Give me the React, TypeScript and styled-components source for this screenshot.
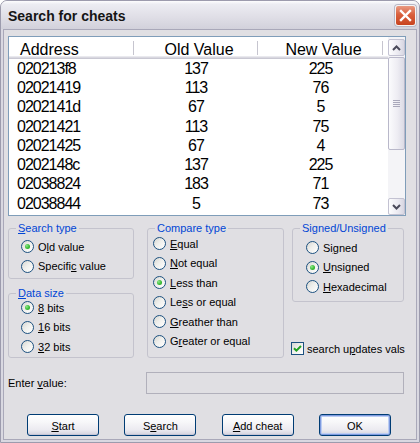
import React from 'react';
import styled, { createGlobalStyle } from 'styled-components';

const colors = {
  face: '#E0DFE3',
  frame: '#D9D8E1',
  legend: '#0046D5',
  groupLine: '#C4C3CD',
  navy: '#1C5180',
  listBorder: '#7F9DB9',
};

const listFont = '"Liberation Sans", Arial, sans-serif';

const GlobalStyle = createGlobalStyle`
  html, body {
    margin: 0;
    padding: 0;
    background: #ffffff;
  }
  body {
    font-family: "Liberation Sans", Arial, sans-serif;
    font-size: 11px;
    color: #000;
  }
  * {
    box-sizing: border-box;
  }
`;

const Window = styled.div`
  width: 420px;
  height: 443px;
  display: flex;
  flex-direction: column;
  border: 1px solid #9C9BAD;
  border-radius: 7px 7px 0 0;
  background: ${colors.frame};
  overflow: hidden;
`;

const TitleBar = styled.div`
  height: 28px;
  flex: none;
  display: flex;
  align-items: center;
  justify-content: space-between;
  padding: 0 3px 0 7px;
  background: linear-gradient(180deg, #fdfdfe 0%, #ececf2 12%, #e0dfe7 55%, #d2d1db 100%);
`;

const Title = styled.span`
  font-size: 14px;
  font-weight: bold;
  color: #151515;
  padding-top: 1px;
`;

const CloseButton = styled.div`
  width: 21px;
  height: 21px;
  border: 1px solid #f4f4f4;
  border-radius: 3px;
  background: linear-gradient(180deg, #e99a82 0%, #d9603e 45%, #c8431f 100%);
  box-shadow: 0 0 0 1px #b9b8c6;
  display: flex;
  align-items: center;
  justify-content: center;
`;

const Client = styled.div`
  flex: 1;
  margin: 0 2px 2px 2px;
  border: 1px solid #A9A8B9;
  background: ${colors.face};
  padding: 6px 12px 0 4px;
  display: flex;
  flex-direction: column;
`;

/* list view */

const ListView = styled.div`
  height: 180px;
  margin-right: -2px;
  border: 1px solid ${colors.listBorder};
  background: #fff;
  display: flex;
`;

const ListBody = styled.div`
  flex: 1;
  display: flex;
  flex-direction: column;
`;

const columns = '125px 124px 125px 1fr';

const HeaderRow = styled.div`
  height: 22px;
  display: grid;
  grid-template-columns: ${columns};
  padding-top: 3px;
  background: #fff;
  box-shadow: inset 0 -1px 0 #c9c8d3, inset 0 -2px 0 #d9d8e0, inset 0 -3px 0 #e9e9ee;
`;

const HeaderCell = styled.div<{ $align: 'left' | 'center'; $pad: number }>`
  display: flex;
  align-items: center;
  justify-content: ${p => (p.$align === 'left' ? 'flex-start' : 'center')};
  padding-left: ${p => p.$pad}px;
  font-family: ${listFont};
  font-size: 16px;
  color: #000;
  background: linear-gradient(#c6c5cf, #c6c5cf) right 1px / 1px 14px no-repeat;
`;

const Row = styled.div`
  height: 19.3px;
  display: grid;
  grid-template-columns: ${columns};
  align-items: center;
  font-family: ${listFont};
  font-size: 16px;
  letter-spacing: -1px;
  color: #000;
`;

const Cell = styled.div<{ $align: 'left' | 'center' }>`
  text-align: ${p => p.$align};
  padding-left: ${p => (p.$align === 'left' ? 8 : 0)}px;
`;

const ScrollBar = styled.div`
  width: 17px;
  flex: none;
  display: flex;
  flex-direction: column;
  background: #f4f4f7;
  padding-top: 2px;
`;

const ScrollButton = styled.div`
  height: 17px;
  flex: none;
  border: 1px solid #c3c2d2;
  border-radius: 2px;
  background: linear-gradient(90deg, #fdfdfe 0%, #ebeaf1 60%, #d8d7e2 100%);
  display: flex;
  align-items: center;
  justify-content: center;
`;

const Thumb = styled.div`
  height: 93px;
  margin-top: 1px;
  border: 1px solid #b9b8ca;
  border-radius: 2px;
  background: linear-gradient(90deg, #fbfbfd 0%, #eeedf3 55%, #dcdbe5 100%);
  display: flex;
  align-items: center;
  justify-content: center;
`;

const Track = styled.div`
  flex: 1;
`;

/* option groups */

const GroupsRow = styled.div`
  margin-top: 6px;
  display: flex;
  height: 136px;
`;

const Column = styled.div<{ $width: number; $gap: number }>`
  width: ${p => p.$width}px;
  margin-left: ${p => p.$gap}px;
  display: flex;
  flex-direction: column;
  gap: 8px;
`;

const Group = styled.fieldset<{ $height: number }>`
  margin: 0;
  padding: 0;
  min-width: 0;
  height: ${p => p.$height}px;
  border: 1px solid ${colors.groupLine};
  border-radius: 3px;
`;

const Legend = styled.legend`
  margin-left: 7px;
  padding: 0 2px;
  line-height: 12px;
  font-size: 11px;
  color: ${colors.legend};
`;

const Options = styled.div<{ $indent: number; $offset: number }>`
  display: flex;
  flex-direction: column;
  padding-left: ${p => p.$indent}px;
  margin-top: ${p => p.$offset}px;
`;

const Option = styled.div`
  height: 19.5px;
  display: flex;
  align-items: center;
  gap: 4px;
  white-space: nowrap;
`;

const RadioCircle = styled.span<{ $checked?: boolean }>`
  width: 13px;
  height: 13px;
  flex: none;
  border-radius: 50%;
  border: 1px solid ${colors.navy};
  background: linear-gradient(135deg, #d6d6d1 0%, #efefec 45%, #ffffff 100%);
  display: flex;
  align-items: center;
  justify-content: center;
  &::after {
    content: '';
    display: ${p => (p.$checked ? 'block' : 'none')};
    width: 5px;
    height: 5px;
    border-radius: 50%;
    background: radial-gradient(circle at 35% 35%, #8fe88b 0%, #3fbf3b 50%, #1f9a1f 100%);
  }
`;

const CheckRow = styled.div`
  margin-top: auto;
  margin-bottom: 3px;
  margin-left: -1px;
  display: flex;
  align-items: center;
  gap: 3px;
  white-space: nowrap;
`;

const CheckBox = styled.span`
  width: 13px;
  height: 13px;
  flex: none;
  border: 1px solid ${colors.navy};
  background: linear-gradient(135deg, #d6d6d1 0%, #efefec 45%, #ffffff 100%);
  display: flex;
  align-items: center;
  justify-content: center;
`;

/* value entry + buttons */

const EntryRow = styled.div`
  margin-top: 14px;
  height: 22px;
  display: flex;
  align-items: center;
  justify-content: space-between;
`;

const ValueInput = styled.input`
  width: 258px;
  height: 22px;
  margin: 0;
  border: 1px solid #b1b0bb;
  background: ${colors.face};
  outline: none;
`;

const ButtonRow = styled.div`
  margin-top: 20px;
  padding-left: 19px;
  display: flex;
  gap: 25.33px;
`;

const Button = styled.button<{ $default?: boolean }>`
  width: 72px;
  height: 22px;
  padding: 1px 0 0;
  border: 1px solid #003C74;
  border-radius: 3px;
  background: linear-gradient(180deg, #ffffff 0%, #f7f7f9 35%, #ebeaf0 75%, #d3d2de 100%);
  font: 11px "Liberation Sans", Arial, sans-serif;
  color: #000;
  box-shadow: ${p =>
    p.$default ? 'inset 0 0 0 1px #7f9be0, inset 0 0 0 2px #bccdf2' : 'inset 0 -1px 0 #c6c5d5'};
`;

/* icons */

const CloseIcon = () => (
  <svg width="13" height="13" viewBox="0 0 13 13">
    <path d="M2 2 L11 11 M11 2 L2 11" stroke="#fff" strokeWidth="2.4" strokeLinecap="square" />
  </svg>
);

const Chevron: React.FC<{ up?: boolean }> = ({ up }) => (
  <svg width="9" height="6" viewBox="0 0 9 6">
    <path
      d={up ? 'M1 5 L4.5 1.5 L8 5' : 'M1 1 L4.5 4.5 L8 1'}
      fill="none"
      stroke="#4a4a5a"
      strokeWidth="2"
    />
  </svg>
);

const Grip = () => (
  <svg width="7" height="8" viewBox="0 0 7 8">
    <path d="M0 0.5 H7 M0 2.5 H7 M0 4.5 H7 M0 6.5 H7" stroke="#a9a8ba" strokeWidth="1" />
  </svg>
);

const CheckMark = () => (
  <svg width="9" height="9" viewBox="0 0 9 9">
    <path d="M1 4.2 L3.4 6.6 L8 2" fill="none" stroke="#21a121" strokeWidth="2" />
  </svg>
);

/* data */

interface IResult {
  address: string;
  oldValue: number;
  newValue: number;
}

const results: IResult[] = [
  { address: '020213f8', oldValue: 137, newValue: 225 },
  { address: '02021419', oldValue: 113, newValue: 76 },
  { address: '0202141d', oldValue: 67, newValue: 5 },
  { address: '02021421', oldValue: 113, newValue: 75 },
  { address: '02021425', oldValue: 67, newValue: 4 },
  { address: '0202148c', oldValue: 137, newValue: 225 },
  { address: '02038824', oldValue: 183, newValue: 71 },
  { address: '02038844', oldValue: 5, newValue: 73 },
];

interface IOption {
  label: React.ReactNode;
  checked?: boolean;
}

const RadioGroup: React.FC<{ options: IOption[]; indent: number; offset: number }> = ({
  options,
  indent,
  offset,
}) => (
  <Options $indent={indent} $offset={offset}>
    {options.map((o, i) => (
      <Option key={i}>
        <RadioCircle $checked={o.checked} />
        <span>{o.label}</span>
      </Option>
    ))}
  </Options>
);

const App: React.FC = () => {
  return (
    <>
      <GlobalStyle />
      <Window>
        <TitleBar>
          <Title>Search for cheats</Title>
          <CloseButton>
            <CloseIcon />
          </CloseButton>
        </TitleBar>
        <Client>
          <ListView>
            <ListBody>
              <HeaderRow>
                <HeaderCell $align="left" $pad={11}>Address</HeaderCell>
                <HeaderCell $align="center" $pad={6}>Old Value</HeaderCell>
                <HeaderCell $align="center" $pad={6}>New Value</HeaderCell>
                <div />
              </HeaderRow>
              {results.map(r => (
                <Row key={r.address}>
                  <Cell $align="left">{r.address}</Cell>
                  <Cell $align="center">{r.oldValue}</Cell>
                  <Cell $align="center">{r.newValue}</Cell>
                </Row>
              ))}
            </ListBody>
            <ScrollBar>
              <ScrollButton>
                <Chevron up />
              </ScrollButton>
              <Thumb>
                <Grip />
              </Thumb>
              <Track />
              <ScrollButton>
                <Chevron />
              </ScrollButton>
            </ScrollBar>
          </ListView>

          <GroupsRow>
            <Column $width={126} $gap={0}>
              <Group $height={57}>
                <Legend><u>S</u>earch type</Legend>
                <RadioGroup
                  indent={12}
                  offset={3}
                  options={[
                    { label: <>O<u>l</u>d value</>, checked: true },
                    { label: <>Specifi<u>c</u> value</> },
                  ]}
                />
              </Group>
              <Group $height={71}>
                <Legend><u>D</u>ata size</Legend>
                <RadioGroup
                  indent={12}
                  offset={-1}
                  options={[
                    { label: <><u>8</u> bits</>, checked: true },
                    { label: <><u>1</u>6 bits</> },
                    { label: <><u>3</u>2 bits</> },
                  ]}
                />
              </Group>
            </Column>

            <Column $width={137} $gap={13}>
              <Group $height={136}>
                <Legend>Compare type</Legend>
                <RadioGroup
                  indent={5}
                  offset={0}
                  options={[
                    { label: <><u>E</u>qual</> },
                    { label: <><u>N</u>ot equal</> },
                    { label: <><u>L</u>ess than</>, checked: true },
                    { label: <>Le<u>s</u>s or equal</> },
                    { label: <><u>G</u>reather than</> },
                    { label: <>G<u>r</u>eater or equal</> },
                  ]}
                />
              </Group>
            </Column>

            <Column $width={112} $gap={8}>
              <Group $height={80}>
                <Legend>Signed/Unsigned</Legend>
                <RadioGroup
                  indent={13}
                  offset={4}
                  options={[
                    { label: <>Si<u>g</u>ned</> },
                    { label: <><u>U</u>nsigned</>, checked: true },
                    { label: <><u>H</u>exadecimal</> },
                  ]}
                />
              </Group>
              <CheckRow>
                <CheckBox>
                  <CheckMark />
                </CheckBox>
                <span>search u<u>p</u>dates vals</span>
              </CheckRow>
            </Column>
          </GroupsRow>

          <EntryRow>
            <span>Enter <u>v</u>alue:</span>
            <ValueInput disabled />
          </EntryRow>

          <ButtonRow>
            <Button><u>S</u>tart</Button>
            <Button>S<u>e</u>arch</Button>
            <Button><u>A</u>dd cheat</Button>
            <Button $default>OK</Button>
          </ButtonRow>
        </Client>
      </Window>
    </>
  );
};

export default App;
